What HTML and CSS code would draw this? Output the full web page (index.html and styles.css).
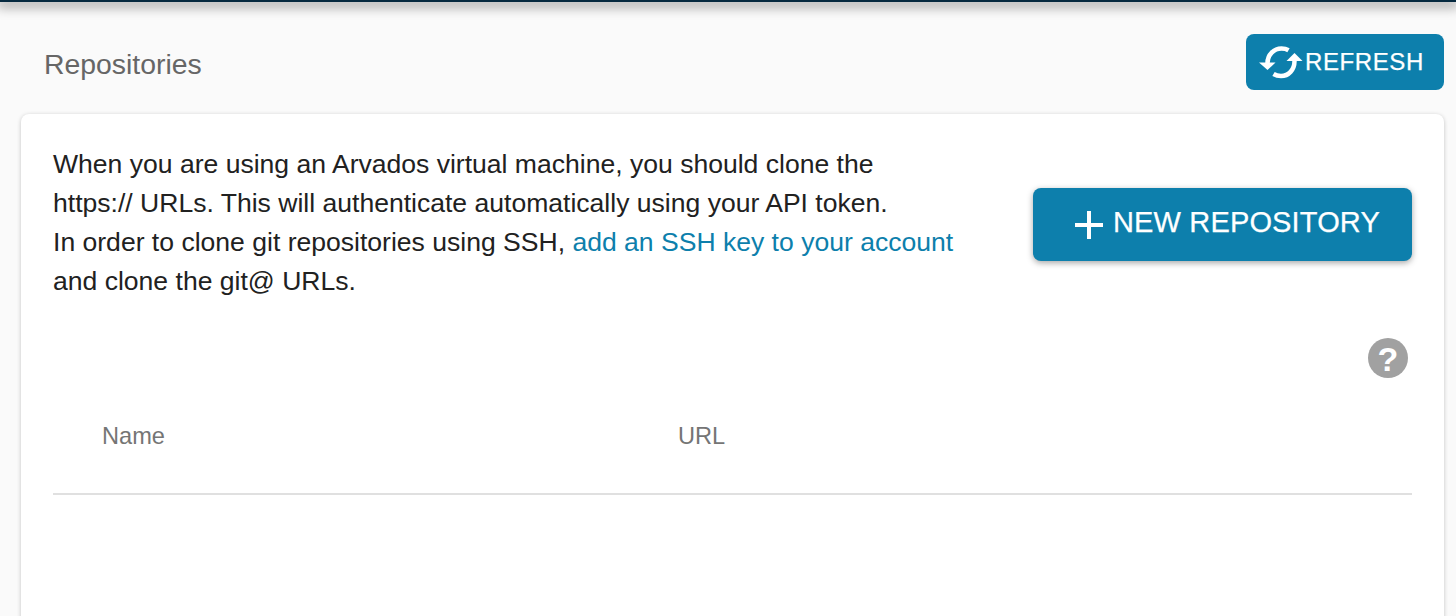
FILE: index.html
```html
<!DOCTYPE html>
<html lang="en">
<head>
<meta charset="utf-8">
<title>Repositories</title>
<link rel="stylesheet" href="styles.css">
</head>
<body>
<div class="topbar"></div>
<main class="page">
  <header class="page-head">
    <h1 class="page-title">Repositories</h1>
    <button class="btn btn-refresh" type="button">
      <svg class="icon-refresh" viewBox="0 0 44 34" width="44" height="34" aria-hidden="true">
        <path class="arc" d="M8.5 18 C8.5 9.5 15 3.5 22.5 3.5 C25.5 3.5 27.5 4 29.5 5.2"/>
        <path class="head" d="M0 17.5 H16.5 L8.5 25 Z"/>
        <path class="arc" d="M35.5 16 C35.5 25 29.5 31 22 31 C19 31 17 30.5 14.5 29"/>
        <path class="head" d="M27.5 16 L35.5 8 L43.5 16 Z"/>
      </svg>
      <span class="btn-label">REFRESH</span>
    </button>
  </header>
  <section class="card">
    <div class="intro">
      <p class="intro-text">When you are using an Arvados virtual machine, you should clone the<br>https:// URLs. This will authenticate automatically using your API token.<br>In order to clone git repositories using SSH, <a class="link" href="#">add an SSH key to your account</a><br>and clone the git@ URLs.</p>
      <button class="btn btn-new" type="button">
        <svg class="icon-plus" viewBox="0 0 28 28" width="28" height="28" aria-hidden="true"><path d="M12 0h4v12h12v4H16v12h-4V16H0v-4h12z"/></svg>
        <span class="btn-label-new">NEW REPOSITORY</span>
      </button>
    </div>
    <div class="help-row">
      <span class="help">?</span>
    </div>
    <div class="table-head">
      <div class="col-name">Name</div>
      <div class="col-url">URL</div>
    </div>
  </section>
</main>
</body>
</html>
```
FILE: styles.css
```css
* { box-sizing: border-box; }
html, body { height: 100%; }
body {
  margin: 0;
  height: 616px;
  overflow: hidden;
  background: #fafafa;
  font-family: "Liberation Sans", Arial, sans-serif;
  color: #212121;
}
.topbar {
  height: 2px;
  background: #05293f;
  box-shadow: 0 2px 12px 3px rgba(0, 0, 0, 0.38);
}
.page {
  padding: 32px 12px 0 21px;
}
.page-head {
  display: flex;
  justify-content: space-between;
  align-items: center;
  height: 56px;
  padding-left: 23px;
}
.page-title {
  margin: 5px 0 0;
  font-size: 28.4px;
  font-weight: 400;
  color: #666;
}
.btn {
  display: flex;
  align-items: center;
  border: 0;
  background: #0d7fac;
  color: #fff;
  font-family: inherit;
  -webkit-text-stroke: 0.25px #fff;
}
.btn-refresh {
  width: 198px;
  height: 56px;
  padding: 0 0 0 13px;
  border-radius: 8px;
  font-size: 24px;
  letter-spacing: 0.6px;
  gap: 2px;
}
.btn-label { margin-bottom: 1px; }
.icon-refresh { display: block; flex: none; overflow: visible; }
.icon-refresh .arc { fill: none; stroke: #fff; stroke-width: 4.5; }
.icon-refresh .head { fill: #fff; }
.card {
  margin-top: 24px;
  height: 520px;
  background: #fff;
  border-radius: 8px;
  box-shadow: 0 1px 4px rgba(0, 0, 0, 0.22);
  padding: 31px 32px 0;
}
.intro {
  display: flex;
  justify-content: space-between;
  align-items: flex-start;
}
.intro-text {
  margin: 0;
  font-size: 26.55px;
  line-height: 39px;
}
.link {
  color: #0d7fac;
  text-decoration: none;
}
.btn-new {
  width: 379px;
  height: 73px;
  margin-top: 43px;
  padding: 0 0 0 42px;
  gap: 10px;
  border-radius: 8px;
  font-size: 29px;
  letter-spacing: 0.15px;
  box-shadow: 0 2px 6px rgba(0, 0, 0, 0.35);
}
.btn-label-new { margin-bottom: 4px; }
.icon-plus { display: block; flex: none; fill: #fff; }
.help-row {
  display: flex;
  justify-content: flex-end;
  padding: 0 4px 0 0;
  margin-top: 37px;
}
.help {
  width: 40px;
  height: 40px;
  border-radius: 50%;
  background: #a1a1a1;
  color: #fff;
  font-size: 34px;
  font-weight: 700;
  line-height: 43px;
  text-align: center;
}
.table-head {
  display: flex;
  align-items: center;
  height: 117px;
  padding: 2px 0 0 49px;
  border-bottom: 2px solid #e0e0e0;
  font-size: 23.6px;
  color: #757575;
}
.col-name { width: 576px; }
```
